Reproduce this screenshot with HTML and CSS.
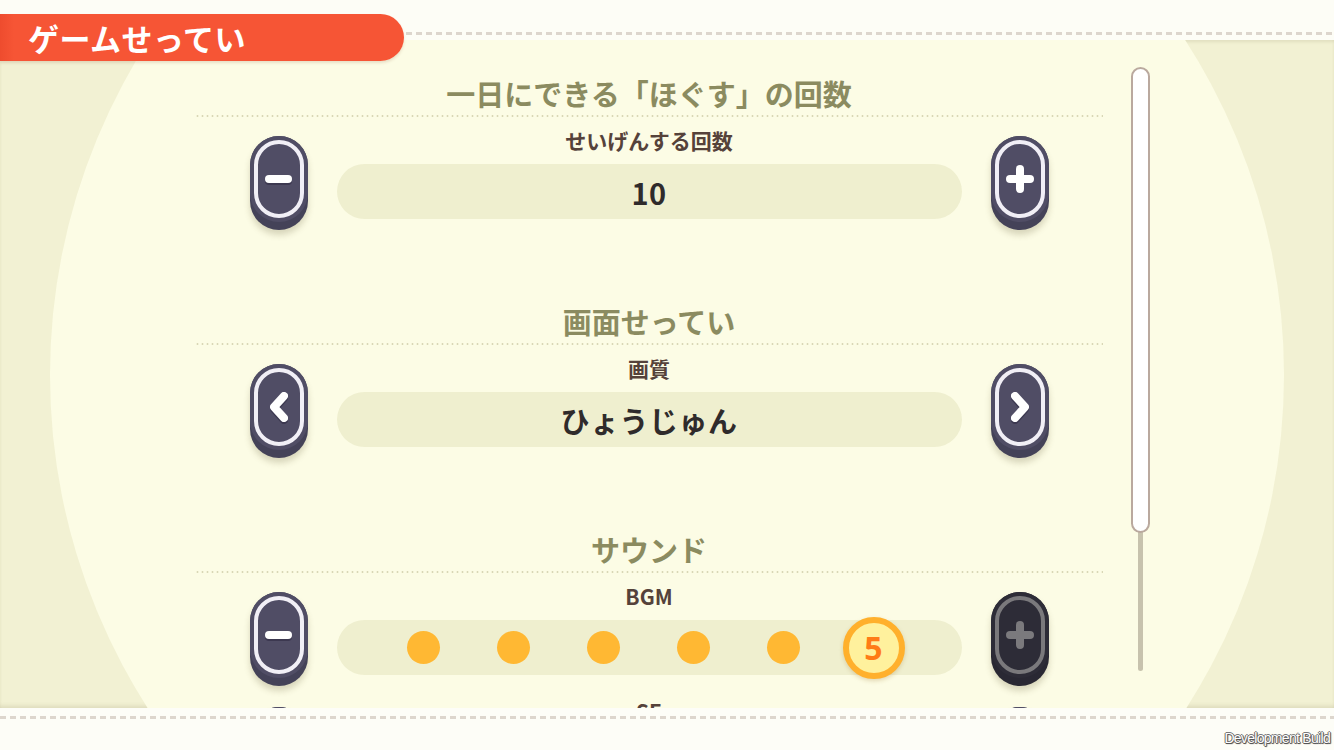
FILE: index.html
```html
<!DOCTYPE html>
<html lang="ja">
<head>
  <meta charset="UTF-8" />
  <meta name="viewport" content="width=device-width, initial-scale=1.0" />
  <title>ゲームせってい</title>
  <link rel="stylesheet" href="styles.css">
</head>
<body>
  <div class="screen">
    <!-- top strip with the page tab -->
    <header class="topbar">
      <div class="dash dash-top"></div>
    </header>
    <div class="tab">ゲームせってい</div>

    <main class="panel">
      <div class="halo"></div>

      <div class="list">
        <section class="group">
          <h2 class="group-title">一日にできる「ほぐす」の回数</h2>
          <div class="rule"></div>
          <div class="item">
            <div class="item-label">せいげんする回数</div>
            <button class="knob knob-left"><span class="ring"><span class="icon-minus"></span></span></button>
            <div class="pill"><span class="value">10</span></div>
            <button class="knob knob-right"><span class="ring"><span class="icon-plus"></span></span></button>
          </div>
        </section>

        <section class="group">
          <h2 class="group-title">画面せってい</h2>
          <div class="rule"></div>
          <div class="item">
            <div class="item-label">画質</div>
            <button class="knob knob-left">
              <span class="ring">
                <svg class="chev" viewBox="0 0 26 34" width="26" height="34"><path d="M18 6 L8 17 L18 28" /></svg>
              </span>
            </button>
            <div class="pill"><span class="value">ひょうじゅん</span></div>
            <button class="knob knob-right">
              <span class="ring">
                <svg class="chev" viewBox="0 0 26 34" width="26" height="34"><path d="M8 6 L18 17 L8 28" /></svg>
              </span>
            </button>
          </div>
        </section>

        <section class="group">
          <h2 class="group-title">サウンド</h2>
          <div class="rule"></div>
          <div class="item">
            <div class="item-label">BGM</div>
            <button class="knob knob-left"><span class="ring"><span class="icon-minus"></span></span></button>
            <div class="pill pill-steps">
              <span class="step"><i class="dot"></i></span>
              <span class="step"><i class="dot"></i></span>
              <span class="step"><i class="dot"></i></span>
              <span class="step"><i class="dot"></i></span>
              <span class="step"><i class="dot"></i></span>
              <span class="step"><b class="badge">5</b></span>
            </div>
            <button class="knob knob-right is-off"><span class="ring"><span class="icon-plus"></span></span></button>
          </div>
          <div class="item">
            <div class="item-label">SE</div>
            <button class="knob knob-left"><span class="ring"><span class="icon-minus"></span></span></button>
            <div class="pill"></div>
            <button class="knob knob-right"><span class="ring"><span class="icon-plus"></span></span></button>
          </div>
        </section>
      </div>

      <div class="scrollbar">
        <div class="thumb"></div>
      </div>
    </main>

    <footer class="bottombar">
      <div class="dash"></div>
      <span class="build">Development Build</span>
    </footer>
  </div>
</body>
</html>
```

FILE: styles.css
```css
body {
  margin: 0;
  background-color: #fdfdf6;
  font-family: "Noto Sans CJK JP", "Noto Sans", sans-serif;
  overflow: hidden;
}

.screen {
  position: relative;
  width: 1334px;
  height: 750px;
  display: flex;
  flex-direction: column;
}

/* header */
.topbar {
  height: 40px;
  flex: none;
  background-color: #fdfdf6;
  display: flex;
  justify-content: flex-end;
}
.dash {
  height: 3px;
  background-image: repeating-linear-gradient(90deg, #ddd6cd 0 6px, transparent 6px 10px);
}
.dash-top {
  width: 928px;
  margin-top: 32px;
}
.tab {
  position: absolute;
  top: 14px;
  left: 0;
  width: 376px;
  height: 47px;
  padding-left: 28px;
  background: linear-gradient(90deg, #ee4c2e 0, #f65535 14px, #f65535 100%);
  border-radius: 0 24px 24px 0;
  color: #fff;
  font-size: 31px;
  font-weight: 700;
  line-height: 47px;
  letter-spacing: 0.5px;
  box-shadow: 0 2px 3px rgba(120, 60, 30, 0.15);
  z-index: 5;
}

/* settings panel */
.panel {
  position: relative;
  height: 668px;
  flex: none;
  background-color: #f2f1d3;
  overflow: hidden;
  box-shadow: inset 0 3px 3px -1px rgba(110, 100, 60, 0.12), inset 0 -4px 4px -2px rgba(110, 100, 60, 0.16);
}
.halo {
  position: absolute;
  left: 50px;
  top: -282px;
  width: 1234px;
  height: 1234px;
  border-radius: 50%;
  background-color: #fcfce5;
}
.list {
  position: relative;
  z-index: 1;
  width: 908px;
  margin-left: 195px;
  padding-top: 35px;
  display: flex;
  flex-direction: column;
  gap: 84px;
}
.group {
  display: flex;
  flex-direction: column;
  align-items: center;
  gap: 22px;
}
.group-title {
  margin: 0;
  height: 36px;
  font-size: 29px;
  line-height: 36px;
  font-weight: 700;
  color: #8b8b60;
}
.rule {
  align-self: stretch;
  height: 2px;
  margin: -18px 0 -13px;
  background-image: radial-gradient(circle, #d9d7b6 0.9px, transparent 1.2px);
  background-size: 5px 2px;
  background-repeat: repeat-x;
}

.item {
  display: grid;
  grid-template-columns: 58px 625px 58px;
  grid-template-rows: 28px 55px;
  column-gap: 29px;
  row-gap: 10px;
}
.item-label {
  grid-column: 2;
  grid-row: 1;
  text-align: center;
  font-size: 21px;
  line-height: 28px;
  font-weight: 700;
  color: #55423a;
}
.pill {
  grid-column: 2;
  grid-row: 2;
  border-radius: 28px;
  background-color: #efefcf;
  display: flex;
  align-items: center;
  justify-content: center;
}
.value {
  font-size: 29px;
  font-weight: 700;
  color: #2f2b2b;
  letter-spacing: 0.5px;
}

/* volume steps */
.pill-steps {
  justify-content: flex-start;
  padding-left: 42px;
}
.step {
  width: 90px;
  display: flex;
  justify-content: center;
  align-items: center;
}
.dot {
  width: 33px;
  height: 33px;
  border-radius: 50%;
  background-color: #ffb833;
}
.badge {
  width: 50px;
  height: 50px;
  border: 6px solid #ffb02c;
  border-radius: 50%;
  background-color: #fff19d;
  color: #ff7c16;
  font-family: "Noto Sans", "Liberation Sans", sans-serif;
  font-size: 32px;
  font-weight: 700;
  line-height: 50px;
  text-align: center;
  box-shadow: 0 2px 4px rgba(150, 110, 30, 0.25);
}

/* round capsule buttons */
.knob {
  grid-row: 1 / 3;
  align-self: start;
  position: relative;
  width: 58px;
  height: 94px;
  margin-top: 10px;
  padding: 0;
  border: 0;
  border-radius: 29px;
  background-color: #444258;
  box-shadow: 0 5px 6px rgba(90, 80, 40, 0.22);
  cursor: pointer;
}
.knob-left { grid-column: 1; }
.knob-right { grid-column: 3; }
.knob::before {
  content: "";
  position: absolute;
  left: 0;
  right: 0;
  top: 0;
  height: 86px;
  border-radius: 29px;
  background-color: #504d65;
}
.ring {
  position: absolute;
  left: 4px;
  right: 4px;
  top: 4px;
  height: 78px;
  box-sizing: border-box;
  border: 4px solid #f1eff6;
  border-radius: 25px;
  display: flex;
  align-items: center;
  justify-content: center;
}
.icon-minus {
  width: 27px;
  height: 8px;
  border-radius: 4px;
  background-color: #fff;
  box-shadow: 0 2px 0 rgba(40, 36, 60, 0.5);
}
.icon-plus {
  position: relative;
  width: 28px;
  height: 28px;
}
.icon-plus::before,
.icon-plus::after {
  content: "";
  position: absolute;
  background-color: #fff;
  border-radius: 4px;
}
.icon-plus::before {
  left: 0;
  right: 0;
  top: 10px;
  height: 8px;
}
.icon-plus::after {
  top: 0;
  bottom: 0;
  left: 10px;
  width: 8px;
}
.chev path {
  fill: none;
  stroke: #fff;
  stroke-width: 8;
  stroke-linecap: round;
  stroke-linejoin: round;
}
.chev {
  filter: drop-shadow(0 2px 0 rgba(40, 36, 60, 0.5));
}

.knob.is-off {
  background-color: #292833;
}
.knob.is-off::before {
  background-color: #2d2c37;
}
.knob.is-off .ring {
  border-color: #7a797c;
}
.knob.is-off .icon-plus::before,
.knob.is-off .icon-plus::after {
  background-color: #7b7a7d;
}

/* scrollbar overlay */
.scrollbar {
  position: absolute;
  left: 1131px;
  top: 27px;
  width: 19px;
  height: 604px;
  z-index: 2;
}
.scrollbar::before {
  content: "";
  position: absolute;
  left: 7px;
  top: 4px;
  bottom: 0;
  width: 5px;
  border-radius: 3px;
  background-color: #c7c2ad;
}
.thumb {
  position: relative;
  width: 19px;
  height: 466px;
  box-sizing: border-box;
  border: 2px solid #baa99e;
  border-radius: 10px;
  background-color: #fff;
}

/* footer */
.bottombar {
  flex: 1;
  position: relative;
  background-color: #fdfdf7;
  padding-top: 8px;
}
.build {
  position: absolute;
  right: 4px;
  bottom: 4px;
  font-family: "Liberation Sans", sans-serif;
  font-size: 14px;
  letter-spacing: -0.7px;
  color: #fff;
  text-shadow: -1px 0 0 #666, 1px 0 0 #666, 0 -1px 0 #777, 0 1px 0 #555, 1px 1px 1px #444;
}
```
